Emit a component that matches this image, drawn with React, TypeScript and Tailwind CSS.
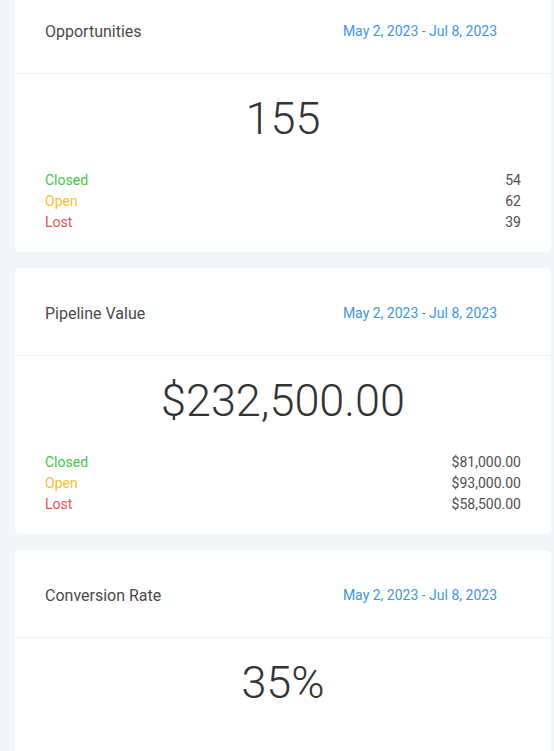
import React from "react";

type Row = { label: string; value: string; color: string };

function Card({ title, value, rows }: { title: string; value: string; rows?: Row[] }) {
  return (
    <div className="bg-white rounded-[5px] ml-[15px] mr-[3px] mb-[16px]">
      <div className="h-[88px] flex items-center justify-between pl-[30px] pr-[54px] pt-[4px] border-b border-[#eef3f6]">
        <span className="text-[16px] text-[#4a4a4a]">{title}</span>
        <span className="text-[14px] text-[#3d97e3]">May 2, 2023 - Jul 8, 2023</span>
      </div>
      <div className={rows ? "px-[30px] pb-[19px]" : "px-[30px] pb-[80px]"}>
        <div className="h-[88px] flex items-center justify-center text-[45px] font-light text-[#333333] pt-[2px]">
          {value}
        </div>
        {rows && (
          <div className="flex flex-col pt-[8px]">
            {rows.map((r) => (
              <div key={r.label} className="flex justify-between text-[14px] leading-[21px]">
                <span style={{ color: r.color }}>{r.label}</span>
                <span className="text-[#505050]">{r.value}</span>
              </div>
            ))}
          </div>
        )}
      </div>
    </div>
  );
}

export default function App() {
  const green = "#45c54c";
  const yellow = "#f8c02a";
  const red = "#e0555a";
  return (
    <div
      className="h-[751px] bg-[#f2f6f8] overflow-hidden"
      style={{ fontFamily: "Roboto, 'Liberation Sans', sans-serif" }}
    >
      <div className="-mt-[14px]">
        <Card
          title="Opportunities"
          value="155"
          rows={[
            { label: "Closed", value: "54", color: green },
            { label: "Open", value: "62", color: yellow },
            { label: "Lost", value: "39", color: red },
          ]}
        />
        <Card
          title="Pipeline Value"
          value="$232,500.00"
          rows={[
            { label: "Closed", value: "$81,000.00", color: green },
            { label: "Open", value: "$93,000.00", color: yellow },
            { label: "Lost", value: "$58,500.00", color: red },
          ]}
        />
        <Card title="Conversion Rate" value="35%" />
      </div>
    </div>
  );
}
